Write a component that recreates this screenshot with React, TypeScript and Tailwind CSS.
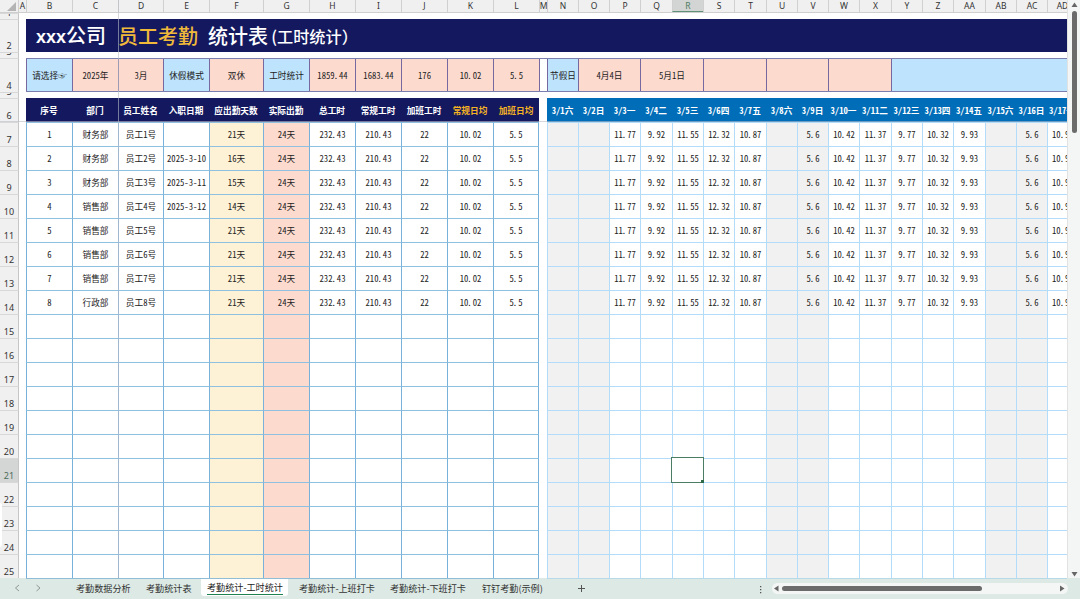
import type { ReactNode } from "react";
import clsx from "clsx";

type Employee = {
  no: number;
  dept: string;
  joined?: string;
  due: string;
};

// column widths B..AD
const COLS =
  "grid grid-cols-[46px_46px_45px_46px_54px_46px_46px_46px_46px_46px_46px_8px_31px_31px_31px_32px_31px_31px_32px_31px_31px_31px_32px_31px_31px_32px_31px_31px_20px]";

const LETTERS = [
  "B", "C", "D", "E", "F", "G", "H", "I", "J", "K", "L", "M", "N", "O", "P",
  "Q", "R", "S", "T", "U", "V", "W", "X", "Y", "Z", "AA", "AB", "AC", "AD",
];

const HEADERS = [
  "序号", "部门", "员工姓名", "入职日期", "应出勤天数", "实际出勤",
  "总工时", "常规工时", "加班工时", "常规日均", "加班日均",
];

const DAYS = [
  { label: "3/1六", value: "", off: true },
  { label: "3/2日", value: "", off: true },
  { label: "3/3一", value: "11.77" },
  { label: "3/4二", value: "9.92" },
  { label: "3/5三", value: "11.55" },
  { label: "3/6四", value: "12.32" },
  { label: "3/7五", value: "10.87" },
  { label: "3/8六", value: "", off: true },
  { label: "3/9日", value: "5.6", off: true },
  { label: "3/10一", value: "10.42" },
  { label: "3/11二", value: "11.37" },
  { label: "3/12三", value: "9.77" },
  { label: "3/13四", value: "10.32" },
  { label: "3/14五", value: "9.93" },
  { label: "3/15六", value: "", off: true },
  { label: "3/16日", value: "5.6", off: true },
  { label: "3/17一", value: "10.98" },
];

const EMPLOYEES: Employee[] = [
  { no: 1, dept: "财务部", due: "21天" },
  { no: 2, dept: "财务部", joined: "2025-3-10", due: "16天" },
  { no: 3, dept: "财务部", joined: "2025-3-11", due: "15天" },
  { no: 4, dept: "销售部", joined: "2025-3-12", due: "14天" },
  { no: 5, dept: "销售部", due: "21天" },
  { no: 6, dept: "销售部", due: "21天" },
  { no: 7, dept: "销售部", due: "21天" },
  { no: 8, dept: "行政部", due: "21天" },
];

const FILTERS = [
  { text: "请选择☞", label: true },
  { text: "2025年" },
  { text: "3月" },
  { text: "休假模式", label: true },
  { text: "双休" },
  { text: "工时统计", label: true },
  { text: "1859.44" },
  { text: "1683.44" },
  { text: "176" },
  { text: "10.02" },
  { text: "5.5" },
];

const HOLIDAYS = ["4月4日", "5月1日", "", "", ""];

const ROWS = Array.from({ length: 19 }, (_, i) => i + 7);

function employeeCells(e?: Employee) {
  if (!e) return Array<string>(11).fill("");
  return [
    String(e.no), e.dept, `员工${e.no}号`, e.joined ?? "", e.due, "24天",
    "232.43", "210.43", "22", "10.02", "5.5",
  ];
}

/* Half-width digits, with the point sitting at the left of its slot */
function Txt({ children }: { children: string }) {
  return (
    <span className="whitespace-pre">
      {children.split(".").map((part, i) => (
        <span key={i}>
          {i > 0 && <span className="inline-block w-[4.33px] text-left -indent-[1px]">.</span>}
          {part}
        </span>
      ))}
    </span>
  );
}

function RowHead({
  n,
  className,
  active,
}: {
  n: number;
  className: string;
  active?: boolean;
}) {
  return (
    <div
      className={clsx(
        "flex w-[19px] shrink-0 items-end justify-center overflow-hidden border-t border-r border-t-[#d8d8d8] border-r-[#c6c6c6] font-['Noto_Sans','Noto_Sans_CJK_SC',sans-serif] text-[9px] leading-[12px]",
        active ? "bg-[#d3d6d4] text-[#4c6b5a]" : "bg-[#f0f0f0] text-[#333]",
        className,
      )}
    >
      {n}
    </div>
  );
}

function Row({ children, className }: { children: ReactNode; className: string }) {
  return <div className={clsx("flex", className)}>{children}</div>;
}

const CENTER = "flex items-center justify-center overflow-hidden whitespace-nowrap";

export default function App() {
  return (
    <div className="flex h-[599px] w-[1080px] flex-col overflow-hidden bg-white font-['Noto_Sans_CJK_SC',sans-serif] text-[8.67px] leading-none text-[#222] [font-feature-settings:'hwid']">
      <div className="flex h-[578px]">
        <div className="relative w-[1067px] overflow-hidden">
          <ColumnHeads />

          <Row className="h-[6px]">
            <RowHead n={1} className="h-[6px]" />
          </Row>

          {/* Title */}
          <Row className="h-[33px]">
            <RowHead n={2} className="h-[33px]" />
            <div className="ml-[7px] flex flex-1 items-center bg-[#14195f] pl-[10px] text-[20px] font-medium whitespace-pre text-white">
              <span className="w-[82px]">
                <span className="font-['Liberation_Sans',sans-serif] text-[18px] font-bold">xxx</span>
                公司
              </span>
              <span className="w-[90px] text-[#f0b93a]">员工考勤</span>
              <span className="w-[60px]">统计表</span>
              <span className="flex pt-[2px] text-[16.2px] [font-feature-settings:normal]">
                <span className="w-[9px] text-right">(</span>工时统计）
              </span>
            </div>
          </Row>

          <Row className="h-[6px]">
            <RowHead n={3} className="h-[6px]" />
          </Row>

          {/* Filters */}
          <Row className="h-[34px]">
            <RowHead n={4} className="h-[34px]" />
            <div className={clsx("ml-[7px] border-y border-[#7b7fb0]", COLS)}>
              {FILTERS.map((f) => (
                <div
                  key={f.text}
                  className={clsx(
                    CENTER,
                    "border-l border-[#77699f]",
                    f.label ? "bg-[#bee4fd]" : "bg-[#fddace]",
                  )}
                >
                  <Txt>{f.text}</Txt>
                </div>
              ))}
              <div className="border-l border-[#77699f] bg-white" />
              <div className={clsx(CENTER, "border-l border-[#77699f] bg-[#bee4fd]")}>
                节假日
              </div>
              {HOLIDAYS.map((h, i) => (
                <div
                  key={i}
                  className={clsx(CENTER, "col-span-2 border-l border-[#77699f] bg-[#fddace]")}
                >
                  {h}
                </div>
              ))}
              <div className="col-span-6 border-l border-[#77699f] bg-[#bee4fd]" />
            </div>
          </Row>

          <Row className="h-[6px]">
            <RowHead n={5} className="h-[6px]" />
          </Row>

          {/* Table header */}
          <Row className="h-[24px]">
            <RowHead n={6} className="h-[24px]" />
            <div className={clsx("ml-[7px] font-bold text-white", COLS)}>
              {HEADERS.map((h, i) => (
                <div
                  key={h}
                  className={clsx(CENTER, "bg-[#14195f]", i > 8 && "text-[#f5b324]")}
                >
                  {h}
                </div>
              ))}
              <div />
              {DAYS.map((d) => (
                <div
                  key={d.label}
                  className="flex items-center justify-center bg-[#006db8] whitespace-nowrap last:justify-start last:pl-[2px]"
                >
                  {d.label}
                </div>
              ))}
            </div>
          </Row>

          {/* Body */}
          {ROWS.map((n, r) => {
            const e = EMPLOYEES[r];
            return (
              <Row key={n} className="h-[24px]">
                <RowHead n={n} className="h-[24px]" active={n === 21} />
                <div className={clsx("ml-[7px]", COLS)}>
                  {employeeCells(e).map((text, i) => (
                    <div
                      key={i}
                      className={clsx(
                        CENTER,
                        "border-t border-l border-t-[#8fc0e0] border-l-[#78b2da]",
                        i === 4 && "bg-[#fdf1d6]",
                        i === 5 && "bg-[#fddace]",
                        i === 10 && "border-r border-r-[#78b2da]",
                      )}
                    >
                      <Txt>{text}</Txt>
                    </div>
                  ))}
                  <div />
                  {DAYS.map((d) => (
                    <div
                      key={d.label}
                      className={clsx(
                        "flex items-center justify-center border-t border-l border-[#b3dcfa] whitespace-nowrap last:justify-start last:pl-[4px]",
                        d.off && "bg-[#f1f1f1]",
                      )}
                    >
                      {e && <Txt>{d.value}</Txt>}
                    </div>
                  ))}
                </div>
              </Row>
            );
          })}

          {/* Frozen pane lines */}
          <div className="absolute top-0 left-[118px] h-full w-px bg-[#b9bcc6]/60" />
          <div className="absolute top-[121px] left-0 h-px w-full bg-[#b9bcc6]/60" />

          {/* Selected cell R21 */}
          <div className="absolute top-[457px] left-[671px] h-[26px] w-[33px] border border-[#4a7d63] bg-white">
            <div className="absolute -right-px -bottom-px h-[3px] w-[3px] bg-[#2c6a49]" />
          </div>

          <div className="absolute top-[503px] left-0 h-[44px] w-[2px] rounded-r bg-white" />
        </div>

        <VerticalScroll />
      </div>

      <TabBar />
    </div>
  );
}

/* ----------------------------- Column heads ----------------------------- */

function ColumnHeads() {
  return (
    <div className="flex h-[13px] border-b border-[#cfcfcf] bg-[#f0f0f0] font-['Noto_Sans',sans-serif] text-[8.5px] text-[#333]">
      <div className="flex w-[19px] items-end justify-end border-r border-[#d0d0d0] pr-[2px] pb-[1px]">
        <svg width="9" height="9" viewBox="0 0 9 9">
          <path d="M9 0V9H0Z" fill="#b4b4b4" />
        </svg>
      </div>
      <div className="flex w-[7px] items-center justify-center">A</div>
      <div className={COLS}>
        {LETTERS.map((l) => (
          <div
            key={l}
            className={clsx(
              "flex items-center justify-center border-l border-[#d0d0d0]",
              l === "R" && "border-b border-b-[#5f9279] bg-[#d2d5d3] pt-[1px] text-[#4c7a62]",
              l === "AD" && "pl-[10px]",
            )}
          >
            {l}
          </div>
        ))}
      </div>
    </div>
  );
}

/* ----------------------------- Scroll bars ----------------------------- */

function VerticalScroll() {
  return (
    <div className="flex w-[13px] flex-col items-center border-l border-[#e2e2e2] bg-[#f4f5f5]">
      <svg className="mt-[2px]" width="7" height="6" viewBox="0 0 7 6">
        <path d="M3.5 0.5L6.5 5H0.5Z" fill="#666" />
      </svg>
      <div className="mt-[3px] h-[122px] w-[5px] rounded-full bg-[#6b6b6b]" />
      <svg className="mt-auto mb-[1px]" width="7" height="6" viewBox="0 0 7 6">
        <path d="M3.5 5.5L6.5 1H0.5Z" fill="#666" />
      </svg>
    </div>
  );
}

/* ----------------------------- Tab bar ----------------------------- */

function TabBar() {
  return (
    <div className="relative flex h-[21px] bg-[#dce9e4] text-[9.1px] whitespace-nowrap text-[#333] [font-feature-settings:normal]">
      {/* bottom edge of the grid */}
      <div className="absolute top-0 left-[26px] h-px w-[513px] bg-[#8fbdd6]" />
      <div className="absolute top-0 left-[547px] h-px w-[520px] bg-[#b7d9e8]" />
      <div className="flex w-[76px] items-center pb-[1px] pl-[14px]">
        <svg width="30" height="8" viewBox="0 0 30 8" fill="none" stroke="#909894">
          <path d="M5 1L1.5 4L5 7M22.5 1L26 4L22.5 7" />
        </svg>
      </div>
      <div className="flex w-[70px] items-center pt-[1px]">考勤数据分析</div>
      <div className="flex w-[55px] items-center pt-[1px]">考勤统计表</div>
      <div className="mt-[1px] h-[17px] w-[87px] rounded-b-[3px] bg-white px-[6px] pt-[4px]">
        <div className="w-[76px] border-b border-[#1d8250] pb-[2px] text-[#222]">
          考勤统计-工时统计
        </div>
      </div>
      <div className="flex w-[92px] items-center pt-[1px] pl-[11px]">考勤统计-上班打卡</div>
      <div className="flex w-[92px] items-center pt-[1px] pl-[10px]">考勤统计-下班打卡</div>
      <div className="flex w-[106px] items-center pt-[1px] pl-[10px]">钉钉考勤(示例)</div>
      <svg className="mt-[7px]" width="7" height="7" viewBox="0 0 7 7" stroke="#555">
        <path d="M3.5 0V7M0 3.5H7" />
      </svg>
      <svg className="mt-[7px] ml-[174px]" width="3" height="9" viewBox="0 0 3 9" fill="#555">
        <path d="M1 1h1.3v1.3H1zM1 4h1.3v1.3H1zM1 7h1.3v1.3H1z" />
      </svg>
      <div className="mt-[5px] ml-[10px] flex h-[11px] w-[296px] items-center rounded-full bg-[#f3f6f5] pl-[2px]">
        <svg width="5" height="7" viewBox="0 0 5 7">
          <path d="M0 3.5L4.5 0.5V6.5Z" fill="#666" />
        </svg>
        <div className="ml-[3px] h-[5px] w-[200px] rounded-full bg-[#6b6b6b]" />
        <svg className="mr-[3px] ml-auto" width="5" height="7" viewBox="0 0 5 7">
          <path d="M4.5 3.5L0 0.5V6.5Z" fill="#666" />
        </svg>
      </div>
    </div>
  );
}
